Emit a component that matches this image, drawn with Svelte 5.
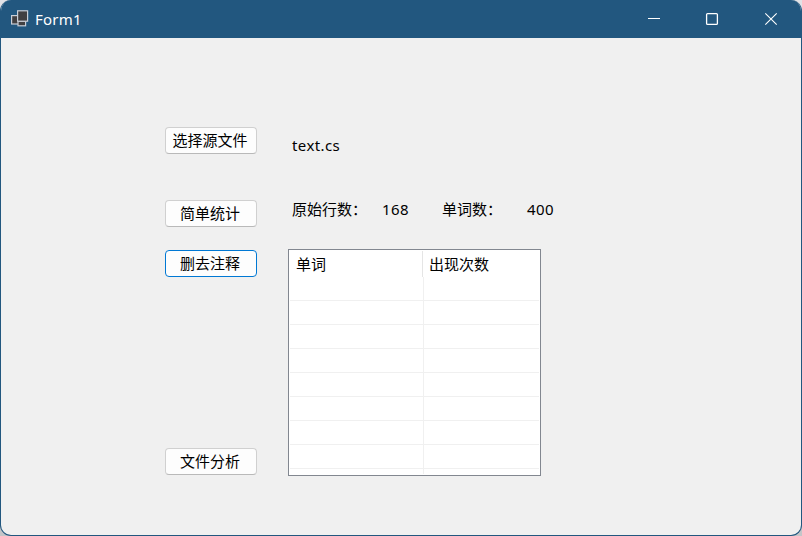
<script>
  const rows = Array.from({ length: 8 });
</script>

<div class="backdrop">
  <div class="window">
    <header>
      <svg class="logo" width="20" height="20" viewBox="0 0 20 20">
        <g fill="#414042" stroke="#c9ced6" stroke-width="1.2">
          <rect x="1.6" y="5.6" width="7" height="8.4" />
          <rect x="8" y="11.2" width="7.6" height="4.6" />
          <rect x="7.6" y="0.8" width="10" height="10.4" />
        </g>
      </svg>
      <span class="title">Form1</span>
      <svg class="controls" width="132" height="14" viewBox="0 0 132 14" fill="none" stroke="#fff">
        <path d="M0 6.5h12" />
        <rect x="58.6" y="1.6" width="10.8" height="10.8" rx="1" stroke-width="1.3" />
        <path d="M117.3 1.3l11.4 11.4M128.7 1.3l-11.4 11.4" stroke-width="1.1" />
      </svg>
    </header>

    <main>
      <div class="actions">
        <button class="choose">选择源文件</button>
        <button class="count">简单统计</button>
        <button class="strip focused">删去注释</button>
        <button class="analyse">文件分析</button>
      </div>
      <div class="results">
        <div class="file">text.cs</div>
        <div class="stats">
          <span class="lines">原始行数：</span>
          <span class="num">168</span>
          <span class="words">单词数：</span>
          <span class="num">400</span>
        </div>
        <div class="list">
          <div class="head">
            <span class="word">单词</span><span class="times">出现次数</span>
          </div>
          <div class="body">
            {#each rows as _}
              <div class="row"><i></i></div>
            {/each}
            <div class="row last"><i></i></div>
          </div>
        </div>
      </div>
    </main>
  </div>
</div>

<style>
  .backdrop {
    width: 802px;
    height: 536px;
    background: linear-gradient(#e2e2e6, #c4c5c8);
  }
  .window {
    box-sizing: border-box;
    width: 802px;
    height: 536px;
    border: 1px solid #22577f;
    border-top: 0;
    border-radius: 11px;
    background: #f0f0f0;
    overflow: hidden;
    display: flex;
    flex-direction: column;
    font-family: "Noto Sans", "Noto Sans CJK SC", sans-serif;
    font-size: 15px;
    color: #000;
  }
  header {
    height: 38px;
    flex: none;
    display: flex;
    align-items: center;
    background: #22577f;
    color: #fff;
    padding: 0 21px 0 9px;
  }
  .logo {
    margin: 2px 5px 0 0;
  }
  .title {
    font-size: 15px;
    line-height: 38px;
    letter-spacing: 0.25px;
  }
  .controls {
    margin-left: auto;
  }
  main {
    flex: 1;
    display: flex;
    padding-left: 164px;
  }
  .actions {
    width: 92px;
    display: flex;
    flex-direction: column;
    padding-top: 89px;
  }
  button {
    box-sizing: border-box;
    width: 92px;
    height: 27px;
    padding: 0 2px 2px 0;
    border: 1px solid #d0d0d0;
    border-bottom-color: #b9b9b9;
    border-radius: 4px;
    background: #fdfdfd;
    font-family: "Noto Sans CJK SC", sans-serif;
    font-size: 15px;
    line-height: 22px;
    color: #000;
    white-space: nowrap;
  }
  .count {
    margin-top: 46px;
  }
  .strip {
    margin-top: 23px;
  }
  .analyse {
    margin-top: 171px;
  }
  .focused {
    border-color: #0078d4;
  }
  .results {
    margin-left: 31px;
    padding-top: 95px;
  }
  .file {
    height: 24px;
    line-height: 24px;
    padding-left: 4px;
    letter-spacing: 0.4px;
  }
  .stats {
    display: flex;
    height: 24px;
    line-height: 24px;
    margin-top: 40px;
    padding-left: 4px;
    white-space: nowrap;
  }
  .lines {
    width: 90px;
  }
  .words {
    width: 85px;
    margin-left: 33px;
  }
  .num {
    width: 27px;
    letter-spacing: 0.4px;
  }
  .list {
    box-sizing: border-box;
    width: 253px;
    height: 227px;
    margin-top: 28px;
    padding: 1px;
    border: 1px solid #828790;
    background: #fff;
  }
  .head {
    display: flex;
    height: 26px;
    line-height: 27px;
  }
  .head span {
    box-sizing: border-box;
    padding-left: 6px;
  }
  .word {
    width: 133px;
    border-right: 1px solid #e5e5e5;
  }
  .body {
    height: 197px;
    overflow: hidden;
  }
  .row {
    box-sizing: border-box;
    height: 24px;
    border-bottom: 1px solid #f0f0f0;
    display: flex;
  }
  .row i {
    width: 133px;
    border-right: 1px solid #f0f0f0;
  }
  .last {
    border-bottom: 0;
  }
</style>
